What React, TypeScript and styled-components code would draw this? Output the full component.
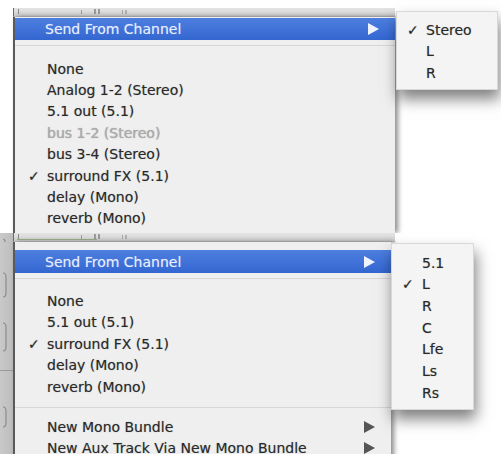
import React from 'react'
import styled, { createGlobalStyle } from 'styled-components'

const GlobalStyle = createGlobalStyle`
  html, body {
    margin: 0;
    padding: 0;
    background: #ffffff;
  }
  body {
    width: 501px;
    height: 454px;
    overflow: hidden;
    font-family: "DejaVu Sans", "Liberation Sans", sans-serif;
  }
`

type Item = { label: string; checked?: boolean; disabled?: boolean; arrow?: boolean }

const topItems: Item[] = [
  { label: 'None' },
  { label: 'Analog 1-2 (Stereo)' },
  { label: '5.1 out (5.1)' },
  { label: 'bus 1-2 (Stereo)', disabled: true },
  { label: 'bus 3-4 (Stereo)' },
  { label: 'surround FX (5.1)', checked: true },
  { label: 'delay (Mono)' },
  { label: 'reverb (Mono)' },
]

const bottomItems: Item[] = [
  { label: 'None' },
  { label: '5.1 out (5.1)' },
  { label: 'surround FX (5.1)', checked: true },
  { label: 'delay (Mono)' },
  { label: 'reverb (Mono)' },
]

const bottomExtra: Item[] = [
  { label: 'New Mono Bundle', arrow: true },
  { label: 'New Aux Track Via New Mono Bundle', arrow: true },
]

const topSub: Item[] = [{ label: 'Stereo', checked: true }, { label: 'L' }, { label: 'R' }]
const bottomSub: Item[] = [
  { label: '5.1' },
  { label: 'L', checked: true },
  { label: 'R' },
  { label: 'C' },
  { label: 'Lfe' },
  { label: 'Ls' },
  { label: 'Rs' },
]

const Ruler = ({ green }: { green?: boolean }) => (
  <RulerBar>
    <svg width="382" height="8" viewBox="0 0 382 8">
      {green && <rect x="3" y="6" width="80" height="1" fill="#9fb08a" />}
      <rect x="4" y="1" width="1" height="5" fill="#8a8a8a" />
      <rect x="67" y="2" width="1" height="4" fill="#9a9a9a" />
      <rect x="80" y="1" width="2" height="5" fill="#9a9a9a" />
      <rect x="84" y="1" width="2" height="5" fill="#9a9a9a" />
      <rect x="108" y="2" width="1" height="4" fill="#a8a8a8" />
      <rect x="111" y="2" width="2" height="4" fill="#b0b0b0" />
    </svg>
  </RulerBar>
)

const Brackets = () => (
  <svg width="13" height="221" viewBox="0 0 13 221">
    <path d="M3 6 q2 0 2 3" stroke="#8c8c8c" strokeWidth="1.2" fill="none" />
    <path d="M3 40 q3 0 3 4 v16 q0 4 -3 4" stroke="#8c8c8c" strokeWidth="1.2" fill="none" />
    <path d="M3 90 q3 0 3 4 v20 q0 4 -3 4" stroke="#8c8c8c" strokeWidth="1.2" fill="none" />
    <rect x="0" y="137" width="13" height="1" fill="#9a9a9a" />
    <path d="M3 174 q3 0 3 4 v12 q0 4 -3 4" stroke="#8c8c8c" strokeWidth="1.2" fill="none" />
  </svg>
)

const Arrow = ({ light }: { light?: boolean }) => (
  <svg width="11" height="12" viewBox="0 0 11 12">
    <path d="M0 0 L11 6 L0 12 Z" fill={light ? '#eef3ff' : '#555555'} />
  </svg>
)

const Row = ({ item, h, indent, checkAt }: { item: Item; h: number; indent: number; checkAt: number }) => (
  <RowLine h={h} indent={indent} disabled={item.disabled}>
    {item.checked && <Check left={checkAt}>✓</Check>}
    <span>{item.label}</span>
    {item.arrow && (
      <ArrowSlot>
        <Arrow />
      </ArrowSlot>
    )}
  </RowLine>
)

const App = () => {
  return (
    <Page>
      <GlobalStyle />

      <Shot h={233}>
        <Gutter />
        <Stage pt={8}>
          <Ruler />
          <Menu w={382} pt={1}>
            <Highlight h={22}>
              <span>Send From Channel</span>
              <ArrowSlot>
                <Arrow light />
              </ArrowSlot>
            </Highlight>
            <Separator mt={5} mb={12} />
            {topItems.map((it) => (
              <Row key={it.label} item={it} h={21.4} indent={32} checkAt={13} />
            ))}
          </Menu>
          <SubMenu left={383} top={11} w={100} pt={7} pb={5}>
            {topSub.map((it) => (
              <Row key={it.label} item={it} h={21.5} indent={29} checkAt={10} />
            ))}
          </SubMenu>
        </Stage>
      </Shot>

      <Shot h={221}>
        <Gutter grey>
          <Brackets />
        </Gutter>
        <Stage pt={0}>
          <Ruler green />
          <Menu w={378} pt={8}>
            <Highlight h={23}>
              <span>Send From Channel</span>
              <ArrowSlot>
                <Arrow light />
              </ArrowSlot>
            </Highlight>
            <Separator mt={5} mb={11} />
            {bottomItems.map((it) => (
              <Row key={it.label} item={it} h={21.5} indent={32} checkAt={13} />
            ))}
            <Separator mt={9} mb={9} />
            {bottomExtra.map((it) => (
              <Row key={it.label} item={it} h={21.3} indent={32} checkAt={13} />
            ))}
          </Menu>
          <SubMenu left={378} top={10} w={81} pt={8} pb={5}>
            {bottomSub.map((it) => (
              <Row key={it.label} item={it} h={21.67} indent={30} checkAt={10} />
            ))}
          </SubMenu>
        </Stage>
      </Shot>
    </Page>
  )
}

export default App

const Page = styled.div`
  width: 501px;
  height: 454px;
  overflow: hidden;
  background: #ffffff;
`

const Shot = styled.div<{ h: number }>`
  height: ${(p) => p.h}px;
  display: flex;
  overflow: hidden;
`

const Gutter = styled.div<{ grey?: boolean }>`
  width: 13px;
  flex-shrink: 0;
  background: ${(p) => (p.grey ? 'linear-gradient(90deg, #c9c9c9, #bdbdbd)' : '#ffffff')};
  svg {
    display: block;
  }
`

const Stage = styled.div<{ pt: number }>`
  position: relative;
  flex: 1;
  padding-top: ${(p) => p.pt}px;
  display: flex;
  flex-direction: column;
`

const RulerBar = styled.div`
  width: 382px;
  height: 9px;
  background: linear-gradient(#e4e4e4, #d2d2d2);
  border-left: 1px solid #6a6a6a;
  border-bottom: 1px solid #c4c4c4;
  box-sizing: border-box;
  svg {
    display: block;
  }
`

const Menu = styled.div<{ w: number; pt: number }>`
  width: ${(p) => p.w}px;
  flex: 1;
  box-sizing: border-box;
  padding-top: ${(p) => p.pt}px;
  background: #efefef;
  border-left: 2px solid #5a5a5a;
  box-shadow: 3px 0 5px rgba(0, 0, 0, 0.45);
  color: #2a2a2a;
  font-size: 14px;
  text-shadow: 0 0 1px rgba(0, 0, 0, 0.35);
`

const Highlight = styled.div<{ h: number }>`
  height: ${(p) => p.h}px;
  display: flex;
  align-items: center;
  padding-left: 30px;
  background: linear-gradient(#4d7fe0, #3466d1);
  color: #e6eeff;
  text-shadow: 0 0 1px rgba(255, 255, 255, 0.4);
  position: relative;
`

const ArrowSlot = styled.div`
  position: absolute;
  right: 16px;
  top: 50%;
  transform: translateY(-50%);
  display: flex;
`

const Separator = styled.div<{ mt: number; mb: number }>`
  height: 1px;
  margin-top: ${(p) => p.mt}px;
  margin-bottom: ${(p) => p.mb}px;
  background: #dad5d6;
`

const RowLine = styled.div<{ h: number; indent: number; disabled?: boolean }>`
  position: relative;
  height: ${(p) => p.h}px;
  display: flex;
  align-items: center;
  padding-left: ${(p) => p.indent}px;
  white-space: nowrap;
  color: ${(p) => (p.disabled ? '#acacac' : '#2a2a2a')};
`

const Check = styled.span<{ left: number }>`
  position: absolute;
  left: ${(p) => p.left}px;
  font-size: 14px;
  font-weight: bold;
  color: #2a2a2a;
`

const SubMenu = styled.div<{ left: number; top: number; w: number; pt: number; pb: number }>`
  position: absolute;
  left: ${(p) => p.left}px;
  top: ${(p) => p.top}px;
  width: ${(p) => p.w}px;
  padding-top: ${(p) => p.pt}px;
  padding-bottom: ${(p) => p.pb}px;
  background: #f4f4f4;
  border: 1px solid #d8d8d8;
  box-shadow: 2px 9px 14px rgba(0, 0, 0, 0.5);
  font-size: 14px;
  color: #2a2a2a;
  text-shadow: 0 0 1px rgba(0, 0, 0, 0.35);
`
